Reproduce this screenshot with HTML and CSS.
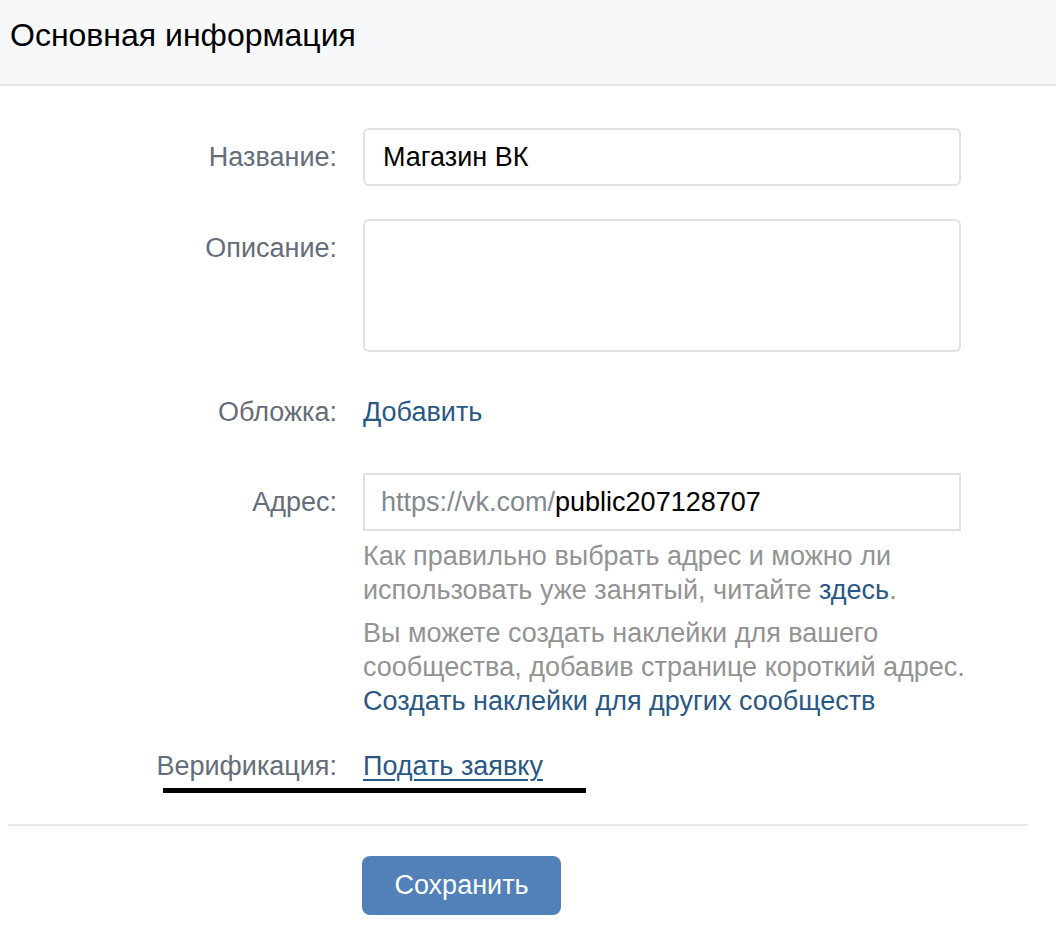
FILE: index.html
```html
<!DOCTYPE html>
<html lang="ru">
<head>
<meta charset="utf-8">
<link rel="stylesheet" href="styles.css">
</head>
<body>
<div class="page">
  <div class="header">Основная информация</div>
  <div class="form">
    <div class="row row-name">
      <div class="label label-field">Название:</div>
      <div class="field"><input class="input" type="text" value="Магазин ВК"></div>
    </div>
    <div class="row row-desc">
      <div class="label label-field">Описание:</div>
      <div class="field"><textarea class="textarea"></textarea></div>
    </div>
    <div class="row row-cover">
      <div class="label">Обложка:</div>
      <div class="field"><a class="link" href="#">Добавить</a></div>
    </div>
    <div class="row row-addr">
      <div class="label label-field">Адрес:</div>
      <div class="field">
        <div class="addr"><span class="addr-prefix">https://vk.com/</span><span class="addr-value">public207128707</span></div>
        <p class="hint">Как правильно выбрать адрес и можно ли использовать уже занятый, читайте <a class="link" href="#">здесь</a>.</p>
        <p class="hint hint-second">Вы можете создать наклейки для вашего сообщества, добавив странице короткий адрес. <a class="link" href="#">Создать наклейки для других сообществ</a></p>
      </div>
    </div>
    <div class="row row-verify">
      <div class="label">Верификация:</div>
      <div class="field"><a class="link link-underline" href="#">Подать заявку</a></div>
    </div>
    <div class="marker"></div>
  </div>
  <div class="divider"></div>
  <div class="actions">
    <button class="button">Сохранить</button>
  </div>
</div>
</body>
</html>
```

FILE: styles.css
```css
html, body {
  margin: 0;
  padding: 0;
  background: #ffffff;
}

.page {
  font-family: "Liberation Sans", Arial, sans-serif;
  font-size: 27px;
  line-height: 34px;
  color: #000000;
}

.header {
  height: 86px;
  box-sizing: border-box;
  padding: 18px 0 0 10px;
  background: #f7f8fa;
  border-bottom: 2px solid #e4e6ea;
  font-size: 32px;
  line-height: 34px;
  color: #000000;
}

.form {
  padding-top: 42px;
}

.row {
  display: grid;
  grid-template-columns: 337px 650px;
  column-gap: 26px;
  align-items: start;
}

.label {
  text-align: right;
  color: #656d78;
}

.label-field {
  padding-top: 12px;
}

.field {
  min-width: 0;
}

.row-name { margin-bottom: 33px; }
.row-desc { margin-bottom: 43px; }
.row-cover { margin-bottom: 44px; }
.row-addr { margin-bottom: 31px; }

.input,
.textarea,
.addr {
  display: block;
  width: 598px;
  box-sizing: border-box;
  margin: 0;
  border: 2px solid #dfe1e5;
  background: #ffffff;
  font-family: inherit;
  font-size: 27px;
  color: #000000;
  outline: none;
}

.input {
  height: 58px;
  padding: 0 18px;
  border-radius: 6px;
}

.textarea {
  height: 133px;
  padding: 10px 18px;
  border-radius: 6px;
  resize: none;
}

.addr {
  height: 58px;
  padding: 0 16px;
  line-height: 54px;
  border-radius: 0;
  white-space: nowrap;
}

.addr-prefix {
  color: #828990;
}

.addr-value {
  color: #000000;
}

.link {
  color: #2a5885;
  text-decoration: none;
}

.link-underline {
  text-decoration: underline;
  text-decoration-thickness: 2px;
  text-underline-offset: 4px;
}

.hint {
  margin: 8px 0 0 0;
  color: #939393;
  line-height: 34px;
}

.hint-second {
  margin-top: 9px;
}

.marker {
  margin: 5px 0 0 163px;
  width: 423px;
  height: 5px;
  background: #000000;
}

.divider {
  margin: 31px 28px 0 8px;
  height: 2px;
  background: #e7e8ec;
}

.actions {
  padding: 30px 0 0 362px;
}

.button {
  width: 199px;
  height: 59px;
  border: none;
  border-radius: 8px;
  background: #5181b8;
  color: #ffffff;
  font-family: "Liberation Sans", Arial, sans-serif;
  font-size: 27px;
  cursor: pointer;
}
```
